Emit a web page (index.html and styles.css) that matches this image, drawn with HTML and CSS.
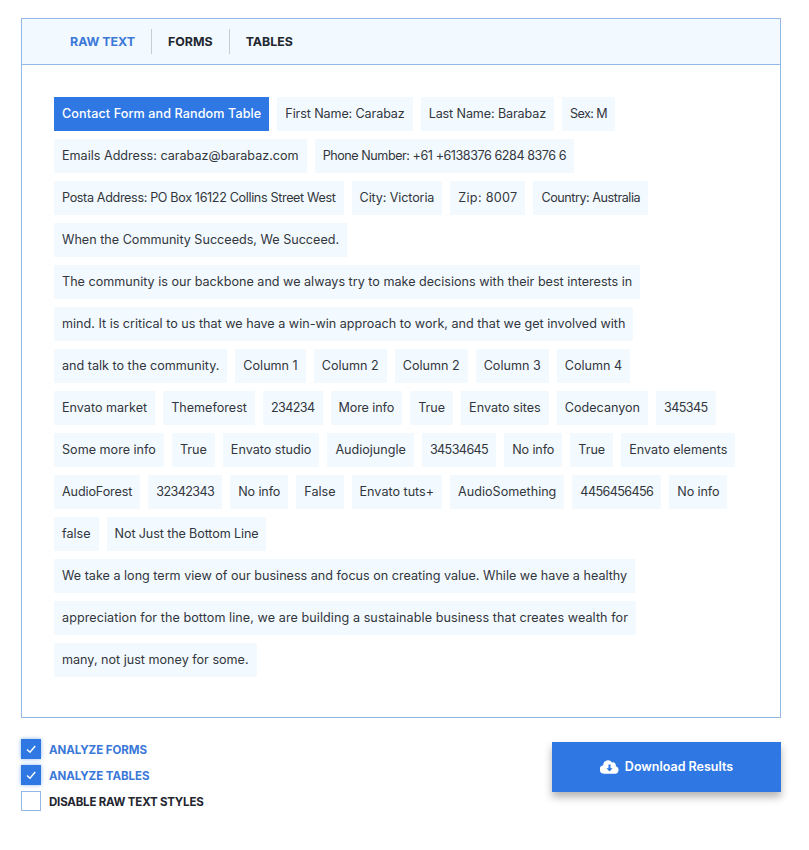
FILE: index.html
```html
<!DOCTYPE html>
<html lang="en">
<head>
  <meta charset="UTF-8">
  <meta name="viewport" content="width=device-width, initial-scale=1.0">
  <title>Raw Text Results</title>
  <link rel="stylesheet" href="styles.css">
</head>
<body>
  <div class="panel">
    <div class="tabs">
      <a class="tab active">RAW TEXT</a>
      <a class="tab">FORMS</a>
      <a class="tab">TABLES</a>
    </div>
    <div class="chips">
      <span class="chip heading">Contact Form and Random Table</span>
      <span class="chip slim">First Name: Carabaz</span>
      <span class="chip slim">Last Name: Barabaz</span>
      <span class="chip num">Sex: M</span>
      <span class="chip">Emails Address: carabaz@barabaz.com</span>
      <span class="chip tighter">Phone Number: +61 +6138376 6284 8376 6</span>
      <span class="chip tight">Posta Address: PO Box 16122 Collins Street West</span>
      <span class="chip slim">City: Victoria</span>
      <span class="chip loose">Zip: 8007</span>
      <span class="chip tighter">Country: Australia</span>
      <span class="chip">When the Community Succeeds, We Succeed.</span>
      <span class="chip">The community is our backbone and we always try to make decisions with their best interests in</span>
      <span class="chip">mind. It is critical to us that we have a win-win approach to work, and that we get involved with</span>
      <span class="chip">and talk to the community.</span>
      <span class="chip">Column 1</span>
      <span class="chip">Column 2</span>
      <span class="chip">Column 2</span>
      <span class="chip">Column 3</span>
      <span class="chip">Column 4</span>
      <span class="chip">Envato market</span>
      <span class="chip">Themeforest</span>
      <span class="chip num">234234</span>
      <span class="chip slim">More info</span>
      <span class="chip">True</span>
      <span class="chip">Envato sites</span>
      <span class="chip">Codecanyon</span>
      <span class="chip num">345345</span>
      <span class="chip">Some more info</span>
      <span class="chip">True</span>
      <span class="chip">Envato studio</span>
      <span class="chip">Audiojungle</span>
      <span class="chip num">34534645</span>
      <span class="chip slim">No info</span>
      <span class="chip">True</span>
      <span class="chip">Envato elements</span>
      <span class="chip slim">AudioForest</span>
      <span class="chip num">32342343</span>
      <span class="chip slim">No info</span>
      <span class="chip">False</span>
      <span class="chip">Envato tuts+</span>
      <span class="chip">AudioSomething</span>
      <span class="chip num">4456456456</span>
      <span class="chip slim">No info</span>
      <span class="chip">false</span>
      <span class="chip slim">Not Just the Bottom Line</span>
      <span class="chip">We take a long term view of our business and focus on creating value. While we have a healthy</span>
      <span class="chip wide">appreciation for the bottom line, we are building a sustainable business that creates wealth for</span>
      <span class="chip">many, not just money for some.</span>
    </div>
  </div>

  <div class="footer">
    <div class="options">
      <label class="option checked">
        <span class="box"><svg viewBox="0 0 12 12" width="12" height="12"><path d="M2 6.500 5 9.300 10.200 3" fill="none" stroke="#fff" stroke-width="1.400"/></svg></span>
        <span class="option-text">ANALYZE FORMS</span>
      </label>
      <label class="option checked">
        <span class="box"><svg viewBox="0 0 12 12" width="12" height="12"><path d="M2 6.500 5 9.300 10.200 3" fill="none" stroke="#fff" stroke-width="1.400"/></svg></span>
        <span class="option-text">ANALYZE TABLES</span>
      </label>
      <label class="option">
        <span class="box"></span>
        <span class="option-text">DISABLE RAW TEXT STYLES</span>
      </label>
    </div>
    <button class="download" type="button">
      <svg viewBox="0 0 20 15" width="19" height="14"><path fill="#fff" d="M16.600 6.600A3 3 0 0 0 12.600 2.800 5 5 0 0 0 3.300 5.300v.4A4.600 4.600 0 0 0 4.600 14.800h11.400a4.200 4.200 0 0 0 .6-8.200z"/><path fill="#2f78e4" d="M8.900 4.800h2.200v4h2.300L10 12.400 6.600 8.800h2.300z"/></svg>
      <span class="download-text">Download Results</span>
    </button>
  </div>
</body>
</html>
```
FILE: styles.css
```css
body {
  margin: 0;
  padding: 18px 28px 0 21px;
  background-color: #fff;
  font-family: Inter, "Noto Sans", sans-serif;
  color: #23262f;
}
.panel {
  height: 700px;
  box-sizing: border-box;
  border: 1px solid #95b9e6;
}
.tabs {
  display: flex;
  align-items: center;
  height: 46px;
  box-sizing: border-box;
  padding-left: 32px;
  background-color: #f2faff;
  border-bottom: 1px solid #95b9e6;
}
.tab {
  padding: 0 16px;
  line-height: 25px;
  font-size: 12.400px;
  font-weight: 700;
  border-left: 1px solid #c3ced6;
}
.tab:first-child {
  border-left: none;
}
.tab.active {
  color: #3b78d8;
}
.chips {
  display: flex;
  flex-wrap: wrap;
  gap: 8px;
  padding: 32px 42px 0 32px;
}
.chip {
  height: 34px;
  padding: 0 8px;
  line-height: 34px;
  font-size: 12.600px;
  color: #33363d;
  background-color: #f2faff;
  white-space: nowrap;
}
.chip.heading {
  background-color: #2f78e4;
  color: #fff;
  font-weight: 500;
  letter-spacing: 0.1px;
}
.slim {
  letter-spacing: -0.12px;
}
.tight {
  letter-spacing: -0.35px;
}
.tighter {
  letter-spacing: -0.45px;
}
.num {
  letter-spacing: -0.6px;
}
.wide {
  letter-spacing: 0.07px;
}
.loose {
  letter-spacing: 0.3px;
}
.footer {
  display: flex;
  justify-content: space-between;
  align-items: flex-start;
  margin-top: 21px;
}
.options {
  display: flex;
  flex-direction: column;
  gap: 6px;
}
.option {
  display: flex;
  align-items: center;
  gap: 8px;
  height: 20px;
  font-size: 11.500px;
  font-weight: 700;
  letter-spacing: -0.05px;
}
.option-text {
  margin-top: 2px;
}
.option:last-child {
  letter-spacing: -0.2px;
}
.option.checked {
  color: #3b78d8;
}
.box {
  display: flex;
  align-items: center;
  justify-content: center;
  box-sizing: border-box;
  width: 20px;
  height: 20px;
  border: 1px solid #95b9e6;
}
.option.checked .box {
  background-color: #2f78e4;
  border-color: #2f78e4;
  box-shadow: 0 0 4px #8fb8ee;
}
.download {
  display: flex;
  align-items: center;
  justify-content: center;
  gap: 6px;
  width: 229px;
  height: 50px;
  margin-top: 3px;
  border: none;
  background-color: #2f78e4;
  color: #fff;
  font-family: inherit;
  font-size: 12.500px;
  font-weight: 600;
  box-shadow: 0 5px 8px rgba(0, 0, 0, 0.3);
  cursor: pointer;
}
.download-text {
  margin-bottom: 2px;
}
```
